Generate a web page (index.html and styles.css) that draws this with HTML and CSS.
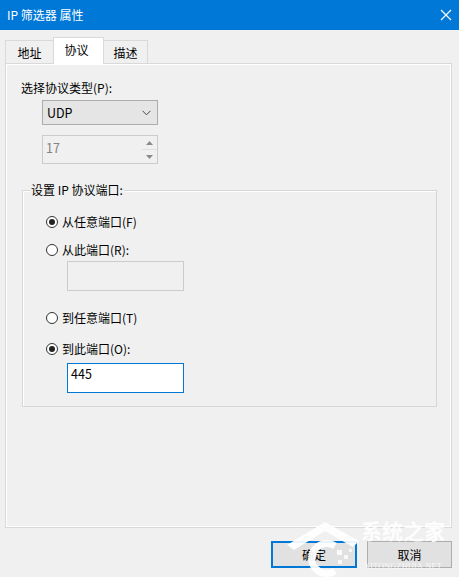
FILE: index.html
```html
<!DOCTYPE html>
<html lang="zh-CN">
<head>
<meta charset="utf-8">
<title>IP 筛选器 属性</title>
<link rel="stylesheet" href="styles.css">
</head>
<body>
<div class="window">
  <div class="titlebar">
    <span class="title">IP 筛选器 属性</span>
    <svg class="close" width="12" height="12" viewBox="0 0 12 12"><path d="M1 1 L11 11 M11 1 L1 11" stroke="#fff" stroke-width="1.2" fill="none"/></svg>
  </div>
  <div class="tabs">
    <div class="tab t1">地址</div>
    <div class="tab active t2">协议</div>
    <div class="tab t3">描述</div>
  </div>
  <div class="panel">
    <div class="label">选择协议类型(P):</div>
    <div class="combo">
      <span>UDP</span>
      <svg width="9" height="6" viewBox="0 0 9 6"><path d="M0.5 0.8 L4.5 4.8 L8.5 0.8" stroke="#444" stroke-width="1" fill="none"/></svg>
    </div>
    <div class="spin">
      <span class="spin-val">17</span>
      <div class="spin-btns">
        <svg width="7" height="4" viewBox="0 0 7 4"><path d="M0 4 L3.5 0 L7 4 Z" fill="#8a8a8a"/></svg>
        <div class="spin-sep"></div>
        <svg width="7" height="4" viewBox="0 0 7 4"><path d="M0 0 L3.5 4 L7 0 Z" fill="#8a8a8a"/></svg>
      </div>
    </div>
    <div class="group">
      <div class="group-title">设置 IP 协议端口:</div>
      <div class="options">
        <div class="radio r1"><span class="dot on"></span><span>从任意端口(F)</span></div>
        <div class="radio r2"><span class="dot"></span><span>从此端口(R):</span></div>
        <div class="field disabled f1"></div>
        <div class="radio r3"><span class="dot"></span><span>到任意端口(T)</span></div>
        <div class="radio r4"><span class="dot on"></span><span>到此端口(O):</span></div>
        <div class="field focus f2">445</div>
      </div>
    </div>
  </div>
  <div class="buttons">
    <div class="btn default">确定</div>
    <div class="btn">取消</div>
  </div>
  <div class="watermark">
    <svg class="wm-logo" width="76" height="58" viewBox="0 0 76 58">
      <polygon points="2,26 40,3 74,22 68,28 40,12 9,31" fill="#fff" opacity="0.92"/>
      <path d="M50 27 A15 15 0 1 0 50 52" stroke="#fff" stroke-width="7" fill="none" opacity="0.92"/>
      <rect x="52" y="31" width="5" height="5" fill="#fff" opacity="0.85"/>
      <rect x="59" y="36" width="4" height="4" fill="#fff" opacity="0.8"/>
      <rect x="53" y="41" width="4" height="4" fill="#fff" opacity="0.8"/>
      <rect x="64" y="30" width="3" height="3" fill="#fff" opacity="0.75"/>
    </svg>
    <div class="wm-text">
      <div class="wm-cn">系统之家</div>
      <div class="wm-en">XITONGZHIJIA.NET</div>
    </div>
  </div>
</div>
</body>
</html>
```
FILE: styles.css
```css
html, body {
  margin: 0;
  padding: 0;
}
body {
  width: 459px;
  height: 577px;
  overflow: hidden;
  background: #f0f0f0;
  font-family: "Noto Sans CJK SC", "Noto Sans", sans-serif;
  font-size: 12px;
  color: #000;
}
.window {
  position: relative;
  width: 459px;
  height: 577px;
  display: flex;
  flex-direction: column;
}
.titlebar {
  height: 30px;
  background: #0078d7;
  color: #fff;
  display: flex;
  align-items: center;
  justify-content: space-between;
  padding: 0 7px 0 7px;
  box-sizing: border-box;
  line-height: 16px;
}
.title {
  font-size: 12px;
}
.close {
  display: block;
  margin-top: -1px;
}
.tabs {
  display: flex;
  align-items: flex-end;
  height: 26px;
  margin-top: 7px;
  padding-left: 5px;
  position: relative;
  z-index: 1;
}
.tab {
  box-sizing: border-box;
  height: 23px;
  border: 1px solid #d9d9d9;
  border-bottom: none;
  background: #f0f0f0;
  display: flex;
  align-items: center;
  justify-content: center;
  line-height: 16px;
  padding-top: 1px;
}
.t1 { width: 48px; border-right: none; }
.t2 { width: 51px; padding-right: 4px; }
.t3 { width: 44px; border-left: none; }
.tab.active {
  height: 27px;
  margin-bottom: -1px;
  background: #fff;
  padding-top: 0;
  padding-bottom: 3px;
}
.panel {
  box-sizing: border-box;
  height: 465px;
  margin: 0 7px 0 5px;
  border: 1px solid #d9d9d9;
  box-shadow: inset 1px 1px 0 #fff, inset -1px -1px 0 #fff;
  background: #f0f0f0;
  padding: 16px 0 0 15px;
  display: flex;
  flex-direction: column;
  align-items: flex-start;
}
.label {
  line-height: 16px;
  color: #000;
}
.combo {
  box-sizing: border-box;
  width: 116px;
  height: 25px;
  margin: 4px 0 0 21px;
  border: 1px solid #adadad;
  background: #e5e5e5;
  display: flex;
  align-items: center;
  justify-content: space-between;
  padding: 0 6px 0 4px;
  line-height: 16px;
  font-size: 12.5px;
}
.combo svg { display: block; }
.spin {
  box-sizing: border-box;
  width: 116px;
  height: 29px;
  margin: 10px 0 0 21px;
  border: 1px solid #cccccc;
  background: #f0f0f0;
  display: flex;
  justify-content: space-between;
}
.spin-val {
  color: #838383;
  line-height: 16px;
  padding: 4px 0 0 3px;
  font-size: 12.5px;
}
.spin-btns {
  width: 15px;
  display: flex;
  flex-direction: column;
  align-items: center;
  justify-content: space-evenly;
}
.spin-btns svg { display: block; }
.spin-sep {
  width: 15px;
  height: 1px;
  background: #e0e0e0;
}
.group {
  box-sizing: border-box;
  width: 415px;
  margin: 26px 0 0 1px;
  border: 1px solid #d6d6d6;
  box-shadow: 1px 1px 0 #fff inset;
  padding: 0 0 13px 0;
}
.group-title {
  width: fit-content;
  margin: -9px 0 0 7px;
  padding: 0 1px;
  background: #f0f0f0;
  line-height: 16px;
}
.options {
  padding: 16px 0 0 23px;
  display: flex;
  flex-direction: column;
  align-items: flex-start;
}
.radio {
  display: flex;
  align-items: center;
  gap: 4px;
  height: 16px;
  line-height: 16px;
}
.r2 { margin-top: 12px; }
.r3 { margin-top: 19px; }
.r4 { margin-top: 15px; }
.dot {
  box-sizing: border-box;
  width: 12px;
  height: 12px;
  border: 1px solid #333;
  border-radius: 50%;
  background: #fff;
  display: flex;
  align-items: center;
  justify-content: center;
}
.dot.on::after {
  content: "";
  width: 6px;
  height: 6px;
  border-radius: 50%;
  background: #222;
}
.field {
  box-sizing: border-box;
  width: 117px;
  height: 30px;
  margin-left: 21px;
  line-height: 16px;
  padding: 2px 0 0 3px;
  font-size: 12.5px;
}
.f1 { margin-top: 3px; }
.f2 { margin-top: 6px; }
.field.disabled {
  border: 1px solid #cccccc;
  background: #f0f0f0;
}
.field.focus {
  border: 1px solid #0078d7;
  background: #fff;
}
.buttons {
  display: flex;
  justify-content: flex-end;
  gap: 10px;
  margin-top: 13px;
  padding-right: 7px;
}
.btn {
  box-sizing: border-box;
  width: 85px;
  height: 27px;
  border: 1px solid #adadad;
  background: #e1e1e1;
  display: flex;
  align-items: center;
  justify-content: center;
  line-height: 14px;
}
.btn.default {
  width: 86px;
  border: 2px solid #0078d7;
}
.watermark {
  position: absolute;
  left: 285px;
  top: 519px;
  display: flex;
  align-items: flex-start;
  pointer-events: none;
}
.wm-logo { display: block; }
.wm-text {
  margin: 2px 0 0 0;
  display: flex;
  flex-direction: column;
  align-items: center;
}
.wm-cn {
  color: rgba(255, 255, 255, 0.9);
  font-size: 21px;
  line-height: 18px;
  font-weight: bold;
}
.wm-en {
  color: rgba(255, 255, 255, 0.85);
  font-family: "Liberation Serif", serif;
  font-size: 8px;
  line-height: 8px;
  margin-top: 24px;
  letter-spacing: 0.3px;
}
```
